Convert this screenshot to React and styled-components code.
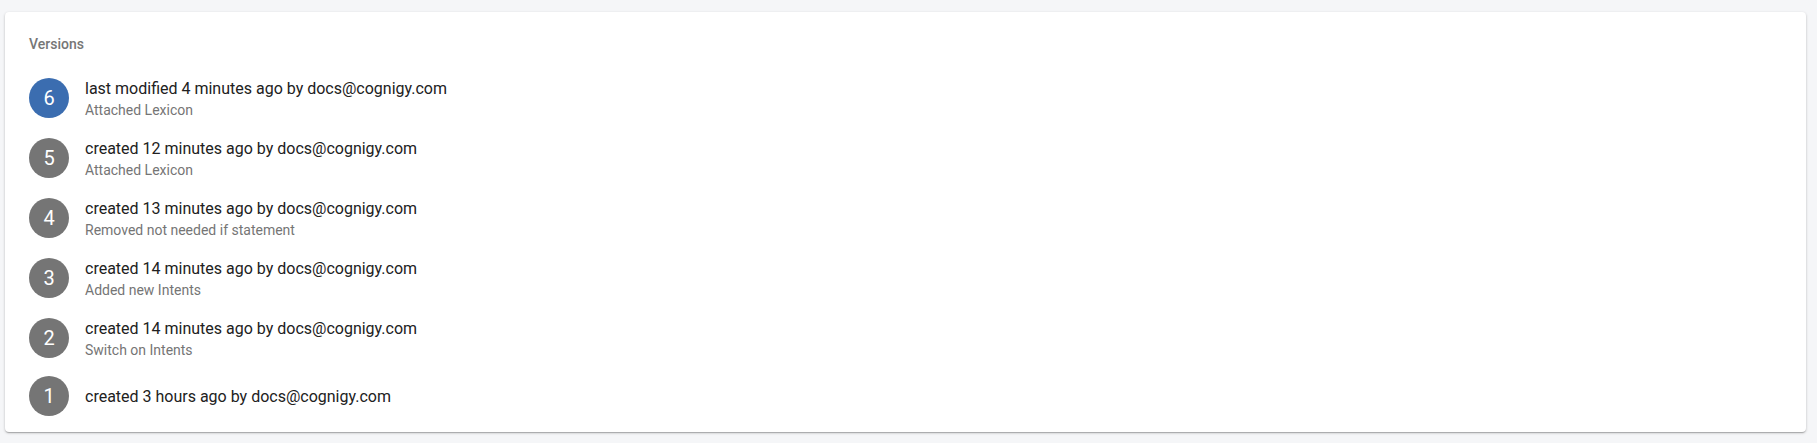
import React from "react";
import styled, { createGlobalStyle } from "styled-components";

const Global = createGlobalStyle`
  html, body { margin: 0; padding: 0; background: #f5f6f8; }
  body { font-family: Roboto, "Noto Sans", sans-serif; }
  * { box-sizing: border-box; }
`;

const Page = styled.div`
  padding: 12px 11px 11px 5px;
`;

const Card = styled.section`
  background: #fff;
  border-radius: 4px;
  box-shadow: 0 1px 3px rgba(0,0,0,0.2), 0 1px 1px rgba(0,0,0,0.12), 0 2px 1px -1px rgba(0,0,0,0.1);
  padding: 22px 24px 8px 24px;
  height: 420px;
`;

const Title = styled.h2`
  margin: 0 0 14px 0;
  font-size: 14px;
  line-height: 20px;
  font-weight: 500;
  color: #767676;
`;

const List = styled.ul`
  list-style: none;
  margin: 0;
  padding: 0;
`;

const Row = styled.li`
  display: flex;
  align-items: center;
  gap: 16px;
  padding: 8px 0;
`;

const Badge = styled.div`
  width: 40px;
  height: 40px;
  border-radius: 50%;
  flex: none;
  display: flex;
  align-items: center;
  justify-content: center;
  background: ${(p) => (p.$active ? "#3b6db0" : "#757575")};
  color: #fff;
  font-size: 20px;
`;

const Texts = styled.div`
  display: flex;
  flex-direction: column;
`;

const Primary = styled.div`
  font-size: 16px;
  line-height: 24px;
  padding-top: 1px;
  color: #212121;
`;

const Secondary = styled.div`
  font-size: 14px;
  line-height: 19px;
  color: #757575;
`;

const versions = [
  { n: 6, text: "last modified 4 minutes ago by docs@cognigy.com", note: "Attached Lexicon", active: true },
  { n: 5, text: "created 12 minutes ago by docs@cognigy.com", note: "Attached Lexicon" },
  { n: 4, text: "created 13 minutes ago by docs@cognigy.com", note: "Removed not needed if statement" },
  { n: 3, text: "created 14 minutes ago by docs@cognigy.com", note: "Added new Intents" },
  { n: 2, text: "created 14 minutes ago by docs@cognigy.com", note: "Switch on Intents" },
  { n: 1, text: "created 3 hours ago by docs@cognigy.com" },
];

export default function App() {
  return (
    <>
      <Global />
      <Page>
        <Card>
          <Title>Versions</Title>
          <List>
            {versions.map((v) => (
              <Row key={v.n}>
                <Badge $active={v.active}>{v.n}</Badge>
                <Texts>
                  <Primary>{v.text}</Primary>
                  {v.note && <Secondary>{v.note}</Secondary>}
                </Texts>
              </Row>
            ))}
          </List>
        </Card>
      </Page>
    </>
  );
}
